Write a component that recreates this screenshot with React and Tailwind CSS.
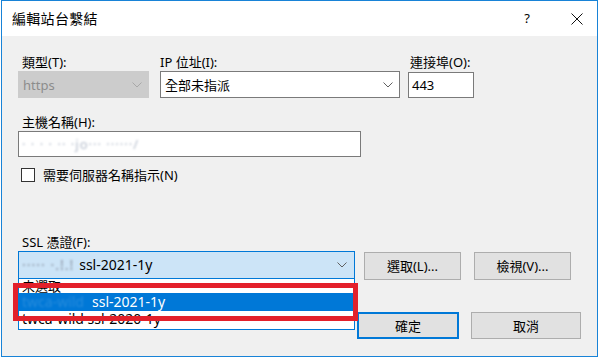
import React from 'react';

const font = { fontFamily: '"Noto Sans", "Noto Sans CJK TC", sans-serif' };

const Chevron = ({ color = '#606060' }) => (
  <svg width="10" height="6" viewBox="0 0 10 6" className="shrink-0">
    <polyline points="0.5,0.5 5,5 9.5,0.5" fill="none" stroke={color} strokeWidth="1" />
  </svg>
);

const Blur = ({ children, className = '' }) => (
  <span className={`blur-[1px] ${className}`}>{children}</span>
);

const Button = ({ children, primary, className = '' }) => (
  <div
    className={`flex items-center justify-center bg-[#e1e1e1] text-[13px] text-black ${
      primary ? 'border-2 border-[#0078d7]' : 'border border-[#adadad]'
    } ${className}`}
  >
    {children}
  </div>
);

export default function App() {
  return (
    <div className="w-[600px] h-[359px] bg-white overflow-hidden" style={font}>
      <div className="ml-[1px] w-[597px] h-[357px] border border-[#1883d7] flex flex-col">
        {/* title bar */}
        <div className="h-[35px] bg-white flex items-center pl-[10px] pr-[14px] shrink-0">
          <span className="text-[14px] text-black tracking-[0.3px]">編輯站台繫結</span>
          <span className="ml-auto text-[13px] text-black mr-[41px]">?</span>
          <svg width="12" height="12" viewBox="0 0 12 12">
            <path d="M0.5 0.5 L11.5 11.5 M11.5 0.5 L0.5 11.5" stroke="#111" strokeWidth="1" />
          </svg>
        </div>

        {/* body */}
        <div className="flex-1 bg-[#f0f0f0] pl-[16px] pt-[17px] text-[13px] text-black leading-[18px]">
          {/* row 1 */}
          <div className="flex">
            <div className="w-[131px]">
              <div className="pl-[4px] h-[18px]">類型(T):</div>
              <div className="h-[27px] bg-[#cccccc] border border-[#cccccc] flex items-center pl-[4px] pr-[6px] text-[#8c8c8c]">
                <span>https</span>
                <span className="ml-auto"><Chevron color="#a8a8a8" /></span>
              </div>
            </div>
            <div className="w-[240px] ml-[11px]">
              <div className="h-[18px]">IP 位址(I):</div>
              <div className="h-[27px] bg-white border border-[#7a7a7a] flex items-center pl-[4px] pr-[6px]">
                <span>全部未指派</span>
                <span className="ml-auto"><Chevron /></span>
              </div>
            </div>
            <div className="w-[66px] ml-[8px]">
              <div className="h-[18px] pl-[2px]">連接埠(O):</div>
              <div className="h-[26px] mt-[1px] bg-white border border-[#7a7a7a] flex items-center pl-[3px]">443</div>
            </div>
          </div>

          {/* host name */}
          <div className="mt-[15px] pl-[4px] h-[18px]">主機名稱(H):</div>
          <div className="w-[343px] h-[26px] bg-white border border-[#7a7a7a] flex items-center pl-[3px]">
            <Blur className="text-[#b4bccb] tracking-[1px]">· · · · ·· ·jo··· ······/</Blur>
          </div>

          {/* checkbox */}
          <div className="mt-[10px] flex items-center h-[16px]">
            <div className="ml-[3px] w-[14px] h-[14px] bg-white border border-[#333]" />
            <span className="ml-[8px]">需要伺服器名稱指示(N)</span>
          </div>

          {/* ssl */}
          <div className="mt-[50px] pl-[4px] h-[18px]">SSL 憑證(F):</div>
          <div className="flex">
            <div className="relative w-[337px]">
              <div className="h-[28px] bg-[#cce4f7] border border-[#0078d7] flex items-center pl-[3px] pr-[7px] text-[14px]">
                <Blur className="text-[#8d97a6] tracking-[1px]">·····  ·.!.!</Blur>
                <span className="ml-[5px]">ssl-2021-1y</span>
                <span className="ml-auto"><Chevron /></span>
              </div>
              {/* dropdown list */}
              <div className="absolute left-0 top-[27px] w-[337px] h-[52px] bg-white border border-[#0078d7] flex flex-col text-[13px] leading-[16px] z-10">
                <div className="h-[14px] pl-[3px] overflow-hidden leading-[14px]">未選取</div>
                <div className="h-[18px] bg-[#0078d7] text-white flex items-center pl-[3px] text-[14px]">
                  <Blur className="text-white/15">twca-wild</Blur>
                  <span className="ml-[8px]">ssl-2021-1y</span>
                </div>
                <div className="h-[16px] pl-[3px] flex items-center text-[14px]">twca-wild ssl-2020-1y</div>
              </div>
              {/* highlight */}
              <div className="absolute left-[-5px] top-[32px] w-[345px] h-[38px] border-[5px] border-[#e3202b] z-20" />
            </div>
            <div className="ml-[9px] mt-[1px] flex gap-[13px]">
              <Button className="w-[97px] h-[28px]">選取(L)...</Button>
              <Button className="w-[97px] h-[28px]">檢視(V)...</Button>
            </div>
          </div>

          {/* ok / cancel */}
          <div className="mt-[32px] ml-[339px] flex gap-[12px]">
            <Button primary className="w-[102px] h-[27px]">確定</Button>
            <Button className="w-[110px] h-[27px]">取消</Button>
          </div>
        </div>
      </div>
    </div>
  );
}
